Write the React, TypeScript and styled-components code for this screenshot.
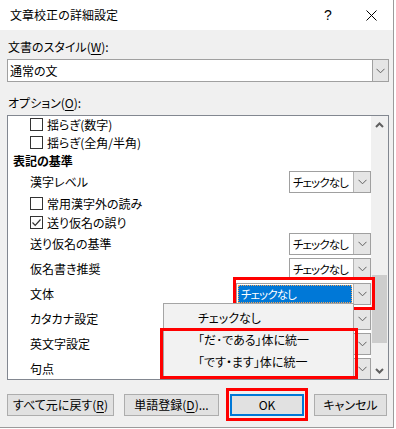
import React from 'react';
import styled, { createGlobalStyle } from 'styled-components';

const FONT = `"Noto Sans CJK JP", "Noto Sans", sans-serif`;

const GlobalStyle = createGlobalStyle`
  html, body { margin: 0; padding: 0; background: #ffffff; }
  body { font-family: ${FONT}; font-size: 12px; color: #000; font-feature-settings: "palt"; }
  * { box-sizing: border-box; }
`;

const Window = styled.div`
  position: relative;
  width: 394px;
  height: 428px;
  border-right: 1px solid #9b9b9b;
  border-bottom: 1px solid #9b9b9b;
  background: #f0f0f0;
  display: flex;
  flex-direction: column;
  overflow: hidden;
`;

const TitleBar = styled.div`
  height: 30px;
  flex-shrink: 0;
  background: #fff;
  display: flex;
  align-items: center;
`;

const Title = styled.div`
  flex: 1;
  padding-left: 10px;
  font-size: 12px;
  line-height: 30px;
  white-space: nowrap;
  font-feature-settings: normal;
`;

const CaptionButton = styled.div<{ $w: number }>`
  width: ${(p) => p.$w}px;
  height: 30px;
  display: flex;
  align-items: center;
  justify-content: center;
  font-family: "Liberation Sans", sans-serif;
  font-size: 14px;
`;

const Body = styled.div`
  flex: 1;
  display: flex;
  flex-direction: column;
  padding: 0 4px 0 7px;
`;

const FieldLabel = styled.div<{ $mt: number }>`
  margin-top: ${(p) => p.$mt}px;
  padding-left: 1px;
  height: 16px;
  line-height: 16px;
  white-space: nowrap;
`;

const U = styled.span`
  text-decoration: underline;
  text-underline-offset: 2px;
`;

const SelectBox = styled.div`
  margin-top: 4px;
  height: 23px;
  border: 1px solid #a0a0a0;
  background: #fff;
  display: flex;
`;

const SelectText = styled.div`
  flex: 1;
  padding-left: 2px;
  line-height: 21px;
`;

const SelectArrow = styled.div`
  width: 16px;
  background: #e5e5e5;
  border-left: 1px solid #a0a0a0;
  display: flex;
  align-items: center;
  justify-content: center;
`;

const ListBox = styled.div`
  margin-top: 4px;
  height: 265px;
  border: 1px solid #828790;
  background: #fff;
  display: flex;
  overflow: hidden;
`;

const ListContent = styled.div`
  flex: 1;
  min-width: 0;
  display: flex;
  flex-direction: column;
  overflow: hidden;
`;

const Row = styled.div<{ $h: number; $indent: number }>`
  height: ${(p) => p.$h}px;
  flex-shrink: 0;
  display: flex;
  align-items: center;
  padding-left: ${(p) => p.$indent}px;
  white-space: nowrap;
`;

const Heading = styled.span`
  font-weight: bold;
`;

const CheckBox = styled.span`
  width: 13px;
  height: 13px;
  border: 1px solid #333;
  background: #fff;
  margin-right: 4px;
  display: inline-flex;
  align-items: center;
  justify-content: center;
`;

const RowLabel = styled.span`
  flex: 1;
`;

const Combo = styled.div<{ $w: number }>`
  width: ${(p) => p.$w}px;
  flex-shrink: 0;
  height: 22px;
  border: 1px solid #a0a0a0;
  background: #fff;
  display: flex;
`;

const ComboText = styled.div<{ $focused?: boolean }>`
  flex: 1;
  min-width: 0;
  overflow: hidden;
  padding-left: 3px;
  font-size: 11.5px;
  letter-spacing: -0.9px;
  margin: ${(p) => (p.$focused ? '1px' : '0')};
  line-height: ${(p) => (p.$focused ? '18px' : '20px')};
  background: ${(p) => (p.$focused ? '#0078d7' : 'transparent')};
  color: ${(p) => (p.$focused ? '#fff' : '#000')};
  outline: ${(p) => (p.$focused ? '1px dotted #f3a55a' : 'none')};
  outline-offset: -1px;
`;

const ComboArrow = styled.div`
  width: 17px;
  flex-shrink: 0;
  background: #e5e5e5;
  border-left: 1px solid #b4b4b4;
  display: flex;
  align-items: center;
  justify-content: center;
`;

const ScrollBar = styled.div`
  width: 17px;
  flex-shrink: 0;
  background: #f0f0f0;
  display: flex;
  flex-direction: column;
`;

const ScrollArrow = styled.div`
  height: 17px;
  display: flex;
  align-items: center;
  justify-content: center;
`;

const ScrollTrack = styled.div`
  flex: 1;
  padding: 142px 1px 0 1px;
`;

const ScrollThumb = styled.div`
  height: 68px;
  background: #cdcdcd;
`;

const ButtonRow = styled.div`
  margin-top: 14px;
  height: 22px;
  display: flex;
`;

const Button = styled.div<{ $w: number; $ml: number; $default?: boolean }>`
  width: ${(p) => p.$w}px;
  margin-left: ${(p) => p.$ml}px;
  height: 22px;
  background: #e1e1e1;
  border: ${(p) => (p.$default ? '2px solid #0078d7' : '1px solid #adadad')};
  display: flex;
  align-items: center;
  justify-content: center;
  white-space: nowrap;
  line-height: 16px;
`;

const Popup = styled.div`
  position: absolute;
  left: 163px;
  top: 303px;
  width: 191px;
  height: 75px;
  border: 1px solid #a5a5a5;
  background: #f2f2f2;
  padding-top: 3px;
  display: flex;
  flex-direction: column;
  z-index: 2;
`;

const PopupItem = styled.div`
  height: 22px;
  line-height: 22px;
  padding-left: 34px;
  white-space: nowrap;
`;

const Annotation = styled.div<{ $x: number; $y: number; $w: number; $h: number; $z: number }>`
  position: absolute;
  left: ${(p) => p.$x}px;
  top: ${(p) => p.$y}px;
  width: ${(p) => p.$w}px;
  height: ${(p) => p.$h}px;
  border: 3px solid #ff0000;
  z-index: ${(p) => p.$z};
  pointer-events: none;
`;

const Chevron = () => (
  <svg width="9" height="6" viewBox="0 0 9 6">
    <path d="M0.5 0.8 L4.5 4.8 L8.5 0.8" fill="none" stroke="#606060" strokeWidth="1" />
  </svg>
);

const ScrollChevron = ({ up }: { up?: boolean }) => (
  <svg width="9" height="6" viewBox="0 0 9 6">
    <path
      d={up ? 'M1 5 L4.5 1.5 L8 5' : 'M1 1 L4.5 4.5 L8 1'}
      fill="none"
      stroke="#606060"
      strokeWidth="2"
    />
  </svg>
);

const CheckMark = () => (
  <svg width="11" height="11" viewBox="0 0 11 11">
    <path d="M1.5 5.5 L4.2 8.3 L9.5 2.5" fill="none" stroke="#333" strokeWidth="1.2" />
  </svg>
);

const CloseIcon = () => (
  <svg width="11" height="11" viewBox="0 0 11 11">
    <path d="M0.5 0.5 L10.5 10.5 M10.5 0.5 L0.5 10.5" stroke="#000" strokeWidth="1" />
  </svg>
);

const CheckRow = ({ h, label, checked }: { h: number; label: string; checked?: boolean }) => (
  <Row $h={h} $indent={22}>
    <CheckBox>{checked ? <CheckMark /> : null}</CheckBox>
    <span>{label}</span>
  </Row>
);

const ComboRow = ({
  label,
  w = 82,
  focused,
  value = 'チェックなし',
}: {
  label: string;
  w?: number;
  focused?: boolean;
  value?: string;
}) => (
  <Row $h={25} $indent={22}>
    <RowLabel>{label}</RowLabel>
    <Combo $w={w}>
      <ComboText $focused={focused}>{value}</ComboText>
      <ComboArrow>
        <Chevron />
      </ComboArrow>
    </Combo>
  </Row>
);

export default function App() {
  return (
    <>
      <GlobalStyle />
      <Window>
        <TitleBar>
          <Title>文章校正の詳細設定</Title>
          <CaptionButton $w={44}>?</CaptionButton>
          <CaptionButton $w={43}>
            <CloseIcon />
          </CaptionButton>
        </TitleBar>
        <Body>
          <FieldLabel $mt={9}>
            文書のスタイル(<U>W</U>):
          </FieldLabel>
          <SelectBox>
            <SelectText>通常の文</SelectText>
            <SelectArrow>
              <Chevron />
            </SelectArrow>
          </SelectBox>
          <FieldLabel $mt={13}>
            オプション(<U>O</U>):
          </FieldLabel>
          <ListBox>
            <ListContent>
              <CheckRow h={17} label="揺らぎ(数字)" />
              <CheckRow h={18} label="揺らぎ(全角/半角)" />
              <Row $h={18} $indent={5}>
                <Heading>表記の基準</Heading>
              </Row>
              <ComboRow label="漢字レベル" />
              <CheckRow h={19} label="常用漢字外の読み" />
              <CheckRow h={18} label="送り仮名の誤り" checked />
              <ComboRow label="送り仮名の基準" />
              <ComboRow label="仮名書き推奨" />
              <ComboRow label="文体" w={135} focused />
              <ComboRow label="カタカナ設定" value="" />
              <ComboRow label="英文字設定" value="" />
              <ComboRow label="句点" value="" />
            </ListContent>
            <ScrollBar>
              <ScrollArrow>
                <ScrollChevron up />
              </ScrollArrow>
              <ScrollTrack>
                <ScrollThumb />
              </ScrollTrack>
              <ScrollArrow>
                <ScrollChevron />
              </ScrollArrow>
            </ScrollBar>
          </ListBox>
          <ButtonRow>
            <Button $w={107} $ml={0}>
              すべて元に戻す(<U>R</U>)
            </Button>
            <Button $w={95} $ml={10}>
              単語登録(<U>D</U>)...
            </Button>
            <Button $w={74} $ml={11} $default>
              OK
            </Button>
            <Button $w={73} $ml={10}>
              キャンセル
            </Button>
          </ButtonRow>
        </Body>
        <Annotation $x={233} $y={277} $w={142} $h={33} $z={1} />
        <Popup>
          <PopupItem>チェックなし</PopupItem>
          <PopupItem>「だ･である」体に統一</PopupItem>
          <PopupItem>「です・ます」体に統一</PopupItem>
        </Popup>
        <Annotation $x={160} $y={328} $w={198} $h={51} $z={3} />
        <Annotation $x={226} $y={388} $w={82} $h={33} $z={3} />
      </Window>
    </>
  );
}
